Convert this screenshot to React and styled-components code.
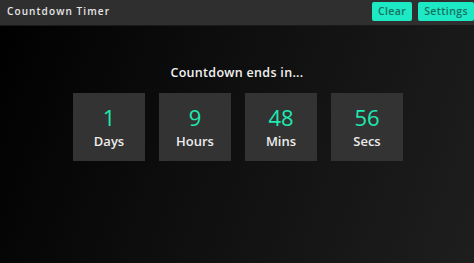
import React from "react";
import styled, { createGlobalStyle } from "styled-components";

const units = [
  { value: 1, label: "Days" },
  { value: 9, label: "Hours" },
  { value: 48, label: "Mins" },
  { value: 56, label: "Secs" },
];

function App() {
  return (
    <>
      <GlobalStyle />
      <StPage>
        <StHeader>
          <StTitle>Countdown Timer</StTitle>
          <StActions>
            <StButton>Clear</StButton>
            <StButton>Settings</StButton>
          </StActions>
        </StHeader>
        <StMain>
          <StHeading>Countdown ends in...</StHeading>
          <StBoxes>
            {units.map((u) => (
              <StBox key={u.label}>
                <StValue>{u.value}</StValue>
                <StLabel>{u.label}</StLabel>
              </StBox>
            ))}
          </StBoxes>
        </StMain>
      </StPage>
    </>
  );
}

export default App;

const GlobalStyle = createGlobalStyle`
  html, body {
    margin: 0;
    padding: 0;
    background: #000;
  }
  body {
    font-family: "Open Sans", "DejaVu Sans", sans-serif;
  }
  * {
    box-sizing: border-box;
  }
`;

const StPage = styled.div`
  width: 474px;
  height: 263px;
  display: flex;
  flex-direction: column;
  background: linear-gradient(110deg, #000 0%, #0d0d0d 40%, #1e1e1e 100%);
  overflow: hidden;
`;

const StHeader = styled.div`
  height: 26px;
  flex-shrink: 0;
  display: flex;
  align-items: center;
  justify-content: space-between;
  padding: 0 0 0 7px;
  background-color: #2f2f2f;
  border-bottom: 1px solid #1a1a1a;
`;

const StTitle = styled.div`
  color: #e6e6e6;
  font-size: 10px;
  font-weight: 600;
  letter-spacing: 1.1px;
  margin-top: -3px;
`;

const StActions = styled.div`
  display: flex;
  gap: 6px;
  margin-top: -3px;
`;

const StButton = styled.button`
  height: 19px;
  margin: 0;
  padding: 0 6px;
  border: none;
  border-radius: 2px;
  background-color: #1de9c4;
  color: #17705f;
  font-family: "Open Sans", "DejaVu Sans", sans-serif;
  font-size: 10.5px;
  font-weight: 600;
  letter-spacing: 0.4px;
  cursor: pointer;
`;

const StMain = styled.div`
  display: flex;
  flex-direction: column;
  align-items: center;
  padding-top: 38px;
`;

const StHeading = styled.div`
  color: #f2f2f2;
  font-size: 12.5px;
  font-weight: 600;
  letter-spacing: 0.3px;
  margin-bottom: 12px;
`;

const StBoxes = styled.div`
  display: flex;
  gap: 14px;
  padding-left: 2px;
`;

const StBox = styled.div`
  width: 72px;
  height: 68px;
  background-color: #333;
  display: flex;
  flex-direction: column;
  align-items: center;
  justify-content: center;
`;

const StValue = styled.div`
  color: #1de9b0;
  font-size: 22px;
  font-weight: 500;
  line-height: 26px;
`;

const StLabel = styled.div`
  color: #ececec;
  font-size: 13px;
  font-weight: 600;
  line-height: 20px;
  margin-top: 1px;
`;
